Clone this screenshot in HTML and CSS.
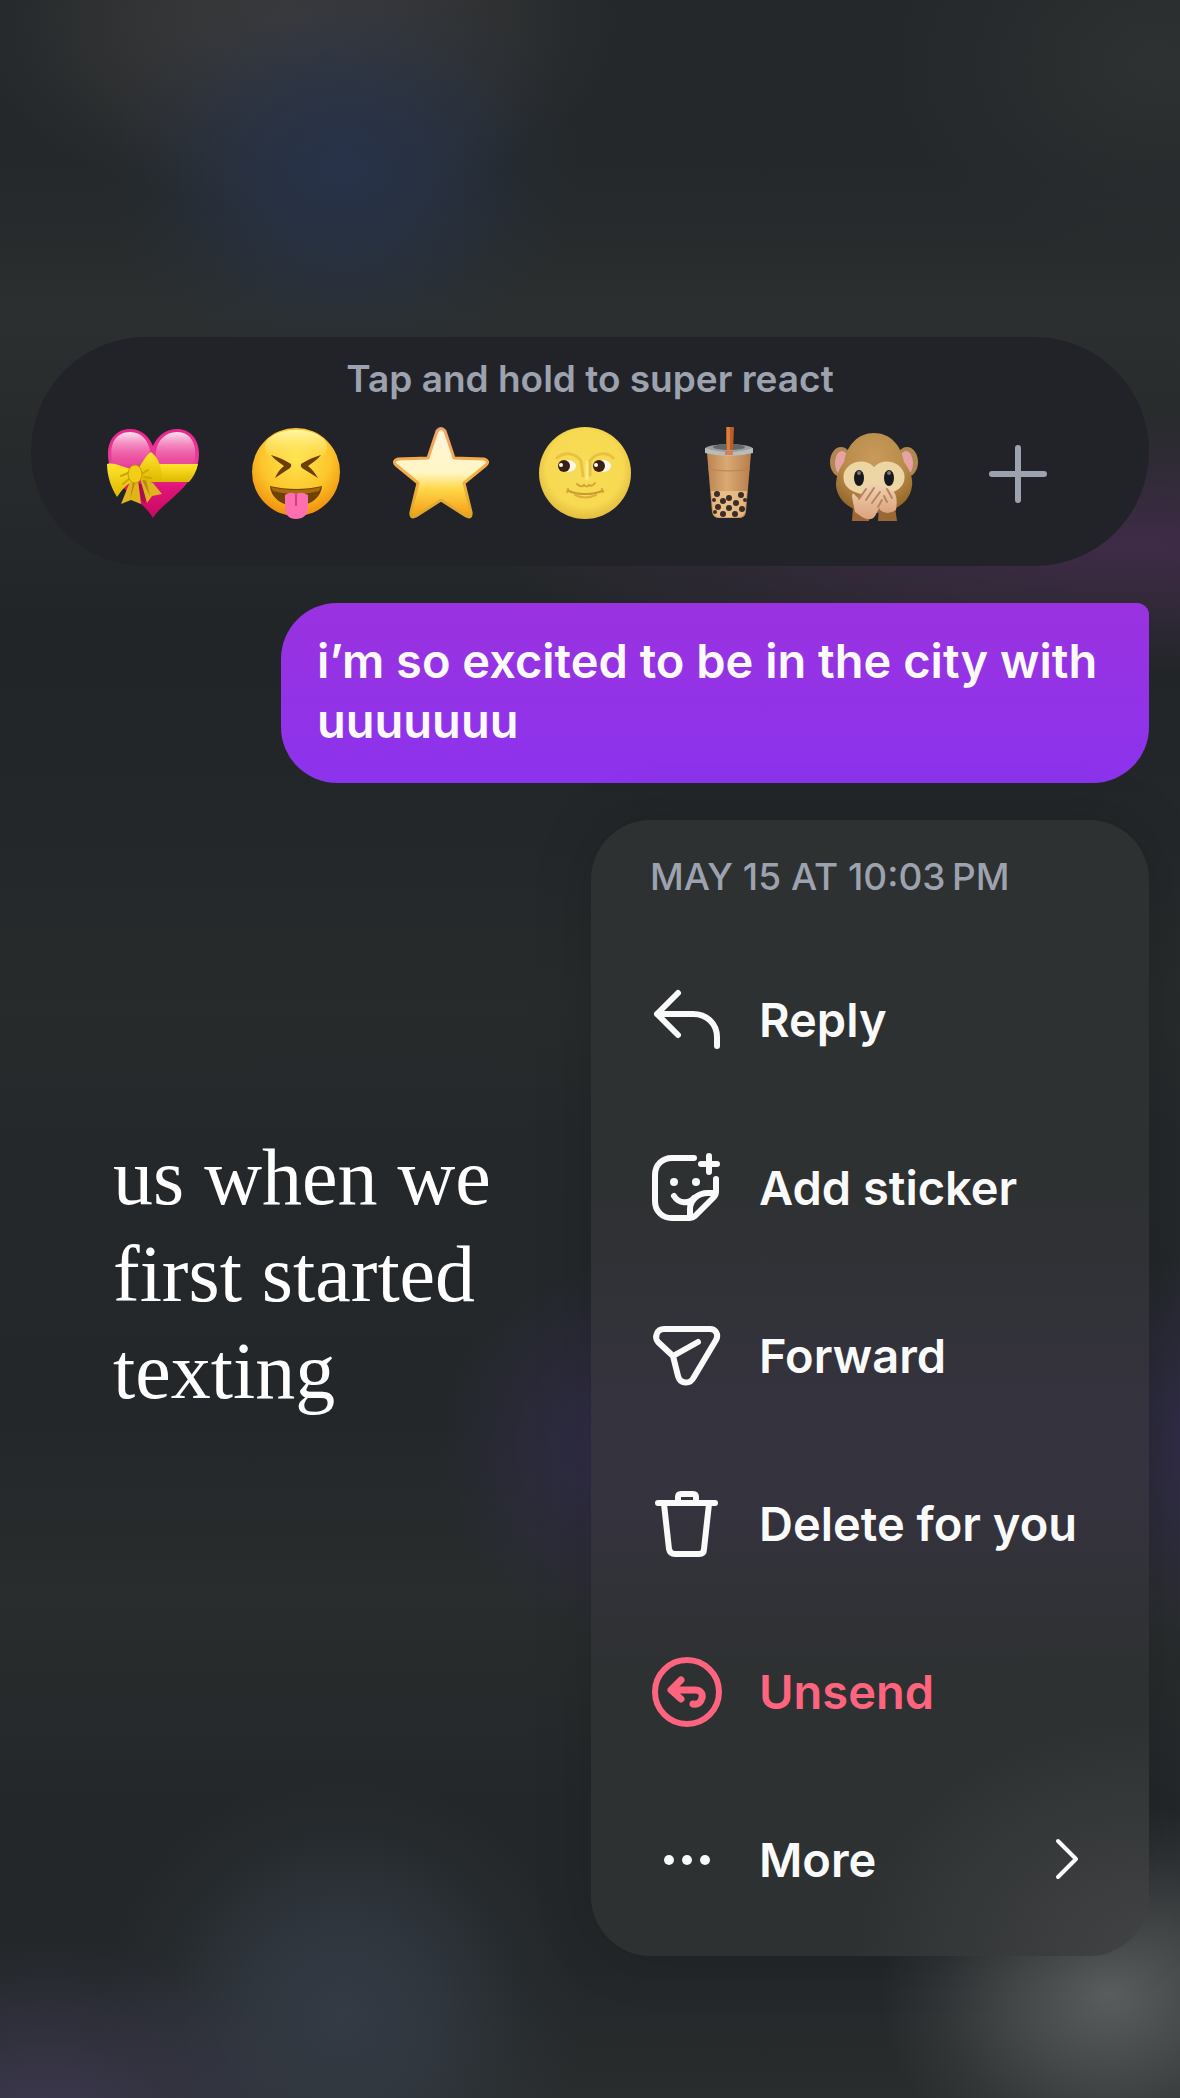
FILE: index.html
```html
<!DOCTYPE html>
<html lang="en">
  <head>
    <meta charset="UTF-8" />
    <meta name="viewport" content="width=device-width, initial-scale=1.0" />
    <title>Message actions</title>
    <link rel="stylesheet" href="styles.css">
  </head>
  <body>
    <main class="screen">
      <!-- Quick reactions -->
      <section class="reactions">
        <p class="reactions-hint">Tap and hold to super react</p>
        <div class="reactions-row">
          <button type="button" class="reaction" aria-label="Heart with ribbon">
            <svg viewBox="0 0 96 96">
              <defs>
                <linearGradient id="heartFill" x1="0" y1="0" x2="0" y2="1">
                  <stop offset="0" stop-color="#e9248c" />
                  <stop offset="0.4" stop-color="#e8429a" />
                  <stop offset="0.65" stop-color="#e0147a" />
                  <stop offset="1" stop-color="#c9095e" />
                </linearGradient>
                <linearGradient id="heartShine" x1="0" y1="0" x2="0" y2="1">
                  <stop offset="0" stop-color="#fde3f0" />
                  <stop offset="1" stop-color="#ee559f" stop-opacity="0.3" />
                </linearGradient>
                <linearGradient id="ribbonFill" x1="0" y1="0" x2="0" y2="1">
                  <stop offset="0" stop-color="#ffe52c" />
                  <stop offset="1" stop-color="#dfb800" />
                </linearGradient>
              </defs>
              <path fill="url(#heartFill)" d="M49 92C43 81 29 72 17 59C8 49 4 39 4 28C4 13 13 3 26 3C37 3 45 10 49 20C53 10 62 3 73 3C86 3 95 13 95 28C95 43 86 55 76 65C65 76 54 83 49 92Z" />
              <path fill="url(#heartShine)" d="M8 33C5 17 13 6 26 6C38 6 44 15 46 24C45 33 41 38 37 38H9ZM52 26C53 15 61 6 73 6C86 6 93 17 91 33L89 38H52Z" />
              <path fill="url(#ribbonFill)" d="M40 38H94Q92 48 85 56H40Z" />
              <path fill="#ab0b51" d="M34 57L43 60L41 78L37 74Z" />
              <path fill="#dfb41c" d="M27 53L17 78L27 74L37 78L34 54ZM36 52L43 77L48 70L58 68L49 57Z" />
              <path fill="#b7880c" d="M29 56L26 73L31 57ZM38 54L46 70L42 54Z" />
              <path fill="url(#ribbonFill)" d="M28 43C20 42 11 36 3 38C3 51 8 63 13 71C18 64 23 57 32 54Z" />
              <path fill="url(#ribbonFill)" d="M34 43C39 36 42 29 47 26C55 32 58 42 58 54C50 57 44 54 37 54Z" />
              <path fill="none" stroke="#d0a50a" stroke-width="2" stroke-linecap="round" d="M24 47L17 50M25 53L19 58M39 47L44 44M40 51L47 52" />
              <ellipse fill="#f4cd17" stroke="#c29b08" cx="31" cy="48" rx="7" ry="9" />
            </svg>
          </button>
          <button type="button" class="reaction" aria-label="Squinting face with tongue">
            <svg viewBox="0 0 96 96">
              <defs>
                <radialGradient id="faceFill" cx="0.5" cy="0.35" r="0.65">
                  <stop offset="0" stop-color="#ffe44e" />
                  <stop offset="0.6" stop-color="#fdc62c" />
                  <stop offset="1" stop-color="#ef8f0c" />
                </radialGradient>
                <linearGradient id="faceShine" x1="0" y1="0" x2="0" y2="1">
                  <stop offset="0" stop-color="#fff7a8" />
                  <stop offset="1" stop-color="#ffe44e" stop-opacity="0" />
                </linearGradient>
              </defs>
              <circle fill="url(#faceFill)" cx="48" cy="46" r="44" />
              <ellipse fill="url(#faceShine)" cx="48" cy="21" rx="31" ry="17" />
              <path fill="#6b3e04" d="M23 29C30 31 37 34 43 38Q44 40 42 42L27 52C29 47 32 43 36 40C32 37 27 34 23 29ZM73 29C66 31 59 34 53 38Q52 40 54 42L70 52C67 47 64 43 60 40C64 37 69 34 73 29Z" />
              <path fill="#6f4103" d="M22 60C38 64 58 64 74 60C73 72 62 80 48 80S23 72 22 60Z" />
              <path fill="#a56a0c" d="M23 61C38 65 58 65 73 61L71 65C57 69 39 69 25 65Z" />
              <path fill="#fd6fae" d="M37 69Q42 65 48 68Q54 65 60 69V81C60 89 55 93 48 93S37 89 37 81Z" />
              <path fill="none" stroke="#cf3d82" stroke-width="2" stroke-linecap="round" d="M48 69V79" />
            </svg>
          </button>
          <button type="button" class="reaction" aria-label="Star">
            <svg viewBox="0 0 96 96">
              <defs>
                <linearGradient id="starFill" x1="0" y1="0" x2="0" y2="1">
                  <stop offset="0" stop-color="#fff3dc" />
                  <stop offset="0.5" stop-color="#fff6c4" />
                  <stop offset="0.68" stop-color="#ffd84a" />
                  <stop offset="1" stop-color="#f79a12" />
                </linearGradient>
                <linearGradient id="starEdge" x1="0" y1="0" x2="0" y2="1">
                  <stop offset="0" stop-color="#f2a066" />
                  <stop offset="0.6" stop-color="#f4b040" />
                  <stop offset="1" stop-color="#d9a82a" />
                </linearGradient>
              </defs>
              <path fill="url(#starFill)" stroke="url(#starEdge)" stroke-width="3" stroke-linejoin="round" d="M44 5Q48 0 52 5L61 32L91 33Q97 35 93 39L71 57L78 86Q79 93 73 90L48 74L23 90Q17 93 18 86L25 57L3 39Q-1 35 5 33L35 32Z" />
            </svg>
          </button>
          <button type="button" class="reaction" aria-label="Full moon face">
            <svg viewBox="0 0 96 96">
              <defs>
                <radialGradient id="moonFill" cx="0.5" cy="0.45" r="0.55">
                  <stop offset="0" stop-color="#f8dc55" />
                  <stop offset="0.75" stop-color="#f7da52" />
                  <stop offset="1" stop-color="#e3bd40" />
                </radialGradient>
              </defs>
              <circle fill="url(#moonFill)" cx="48" cy="47" r="46" />
              <path fill="none" stroke="#e8c142" stroke-width="3" stroke-linecap="round" d="M20 32C27 25 39 27 44 35L46 50M76 32C70 25 58 27 53 35V49" />
              <ellipse fill="#fff8e8" cx="31" cy="40" rx="8" ry="6" />
              <ellipse fill="#fff8e8" cx="66" cy="40" rx="8" ry="6" />
              <circle fill="#3c1f14" cx="27" cy="40" r="6" />
              <circle fill="#3c1f14" cx="62" cy="40" r="6" />
              <circle fill="#fff" cx="24" cy="39" r="2" />
              <circle fill="#fff" cx="59" cy="39" r="2" />
              <path fill="none" stroke="#d3a436" stroke-width="2" stroke-linecap="round" d="M40 58Q44 62 47 59Q50 62 52 59Q55 61 58 57M30 66Q31 65 31 63M66 66Q66 65 65 63" />
              <path fill="none" stroke="#cb9a35" stroke-width="2" stroke-linecap="round" d="M32 65C40 69 56 69 65 65" />
              <path fill="none" stroke="#dcae3d" stroke-width="2" stroke-linecap="round" d="M38 69Q48 74 59 69" />
              <path fill="none" stroke="#fdea82" stroke-width="3" stroke-linecap="round" d="M50 36V53" />
            </svg>
          </button>
          <button type="button" class="reaction" aria-label="Bubble tea">
            <svg viewBox="0 0 96 96">
              <defs>
                <linearGradient id="teaFill" x1="0" y1="0" x2="1" y2="0">
                  <stop offset="0" stop-color="#bc8351" />
                  <stop offset="0.45" stop-color="#daaa73" />
                  <stop offset="1" stop-color="#b77d4b" />
                </linearGradient>
              </defs>
              <path fill="url(#teaFill)" d="M26 27H70L65 86Q64 92 58 92H38Q32 92 31 86Z" />
              <path fill="#f0c891" opacity="0.7" d="M30 65H66L64 86Q63 91 57 91H38Q33 91 32 85Z" />
              <path fill="none" stroke="#bb8251" stroke-width="1" d="M27 43Q48 47 69 43" />
              <ellipse fill="#9b9d9e" cx="48" cy="23" rx="24" ry="5" />
              <path fill="#babbbb" d="M24 22Q48 30 72 22V27Q48 33 24 27Z" />
              <ellipse fill="#5f6769" cx="48" cy="21" rx="16" ry="3" />
              <path fill="#b95e26" d="M45 1H53L52 24H45Z" />
              <path fill="#d67f3e" d="M46 1H49V24H46Z" />
              <path fill="#df7951" d="M44 25H52V29H44Z" />
              <g fill="#3c2d27">
                <circle cx="36" cy="68" r="3" /><circle cx="60" cy="69" r="3" />
                <circle cx="48" cy="72" r="3" /><circle cx="42" cy="75" r="3" />
                <circle cx="33" cy="74" r="2" /><circle cx="55" cy="77" r="3" />
                <circle cx="64" cy="74" r="2" /><circle cx="37" cy="81" r="3" />
                <circle cx="48" cy="82" r="3" /><circle cx="61" cy="83" r="3" />
                <circle cx="42" cy="88" r="3" /><circle cx="54" cy="88" r="3" />
                <circle cx="34" cy="86" r="2" />
              </g>
            </svg>
          </button>
          <button type="button" class="reaction" aria-label="Speak-no-evil monkey">
            <svg viewBox="0 0 96 96">
              <defs>
                <radialGradient id="furFill" cx="0.5" cy="0.3" r="0.7">
                  <stop offset="0" stop-color="#c99b5a" />
                  <stop offset="0.6" stop-color="#b98b4a" />
                  <stop offset="1" stop-color="#946629" />
                </radialGradient>
                <linearGradient id="handFill" x1="0" y1="0" x2="0" y2="1">
                  <stop offset="0" stop-color="#f0d3b2" />
                  <stop offset="1" stop-color="#dba37d" />
                </linearGradient>
              </defs>
              <ellipse fill="#b18751" cx="15" cy="36" rx="11" ry="15" />
              <ellipse fill="#b18751" cx="81" cy="36" rx="11" ry="15" />
              <ellipse fill="#e7a3a4" cx="16" cy="37" rx="7" ry="12" />
              <ellipse fill="#e7a3a4" cx="80" cy="37" rx="7" ry="12" />
              <path fill="url(#furFill)" d="M48 7C64 7 75 19 78 36C85 45 87 54 86 60C84 77 68 87 48 87S12 77 10 60C10 50 13 43 18 36C21 19 32 7 48 7Z" />
              <path fill="#ecd6a6" d="M48 41C38 31 22 36 18 47C15 60 25 69 48 69S81 60 78 47C74 36 58 31 48 41Z" />
              <ellipse fill="#18191c" cx="33" cy="52" rx="5" ry="8" />
              <ellipse fill="#18191c" cx="63" cy="52" rx="5" ry="8" />
              <circle fill="#777" cx="33" cy="47" r="2" />
              <circle fill="#777" cx="63" cy="47" r="2" />
              <path fill="#9b6835" d="M27 81H44L43 95H26ZM53 81H69L71 95H52Z" />
              <path fill="url(#handFill)" d="M52 59Q55 55 59 60L68 66Q72 71 70 84Q61 90 54 84L47 66Z" />
              <path fill="url(#handFill)" d="M26 71Q26 65 29 69L33 73L42 58Q46 55 47 59L52 58Q55 60 52 64Q58 64 56 69Q59 71 56 77L49 90Q45 96 36 91L29 86Z" />
              <path fill="none" stroke="#b98560" stroke-width="2" stroke-linecap="round" d="M33 73L40 63M40 74L48 62M46 77L54 66M52 81L56 74M61 63L66 72M58 70L61 76" />
            </svg>
          </button>
          <button type="button" class="reaction" aria-label="More reactions">
            <svg viewBox="0 0 96 96">
              <path class="plus" d="M22 48H74M48 22V74" />
            </svg>
          </button>
        </div>
      </section>

      <!-- Selected message -->
      <p class="bubble">i’m so excited to be in the city with uuuuuuu</p>

      <div class="lower">
        <p class="caption">us when we<br />first started<br />texting</p>

        <!-- Message menu -->
        <nav class="menu">
          <p class="menu-time">MAY 15 AT 10:03&#8201;PM</p>
          <button type="button" class="menu-item">
            <svg class="icon" viewBox="0 0 72 72">
              <path d="M28 10L7 31L28 52M7 31H43C57 31 67 41 67 54V63" />
            </svg>
            <span>Reply</span>
          </button>
          <button type="button" class="menu-item">
            <svg class="icon" viewBox="0 0 72 72">
              <path d="M44 7H22C12 7 5 14 5 24V50C5 60 12 67 22 67H40Q43 67 45 65L63 47Q66 44 66 41V28" />
              <path d="M64 42H58C47 42 40 50 40 58V65M24 45C29 53 39 53 44 47" />
              <path d="M51 13H67M59 5V21" />
              <circle class="dot" cx="24" cy="31" r="4" />
              <circle class="dot" cx="46" cy="31" r="4" />
            </svg>
            <span>Add sticker</span>
          </button>
          <button type="button" class="menu-item">
            <svg class="icon" viewBox="0 0 72 72">
              <path d="M14 10H60C66 10 69 16 66 21L44 58C40 66 30 65 28 57L23 37L8 23C4 18 7 10 14 10ZM23 37L48 23" />
            </svg>
            <span>Forward</span>
          </button>
          <button type="button" class="menu-item">
            <svg class="icon" viewBox="0 0 72 72">
              <path d="M8 16H65M28 15V10Q28 7 31 7H43Q46 7 46 10V15M14 17L19 62Q20 67 25 67H49Q54 67 54 62L59 17" />
            </svg>
            <span>Delete for you</span>
          </button>
          <button type="button" class="menu-item danger">
            <svg class="icon" viewBox="0 0 72 72">
              <circle cx="37" cy="37" r="32" />
              <path class="thick" d="M31 25L21 35L31 44M22 35H45C51 35 53 39 52 43C51 47 48 50 43 49" />
            </svg>
            <span>Unsend</span>
          </button>
          <button type="button" class="menu-item">
            <svg class="icon" viewBox="0 0 72 72">
              <circle class="dot" cx="19" cy="37" r="5" />
              <circle class="dot" cx="37" cy="37" r="5" />
              <circle class="dot" cx="55" cy="37" r="5" />
            </svg>
            <span>More</span>
            <svg class="chevron" viewBox="0 0 24 44">
              <path d="M3 4L21 22L3 40" />
            </svg>
          </button>
        </nav>
      </div>
    </main>
  </body>
</html>
```
FILE: styles.css
```css
* {
  box-sizing: border-box;
}
body {
  margin: 0;
  min-height: 100vh;
  color: #fafafa;
  font-family: Inter, "Liberation Sans", sans-serif;
  /* blurred chat behind the overlay */
  background:
    radial-gradient(ellipse 230px 190px at 94% 95%, #5a5e5f, #5a5e5f99 40%, #5a5e5f33 75%, #5a5e5f00),
    radial-gradient(ellipse 260px 180px at 4% 101%, #3c3850, #3c385080 45%, #3c385000),
    radial-gradient(ellipse 240px 240px at 29% 96%, #343b45, #343b45b3 40%, #343b4533 75%, #343b4500),
    radial-gradient(ellipse 200px 190px at 54% 69%, #332d4c, #332d4c80 50%, #332d4c00),
    radial-gradient(ellipse 120px 200px at 102% 69%, #332d4c, #332d4c80 50%, #332d4c00),
    radial-gradient(ellipse 660px 130px at 96% 26%, #3f2b47, #3f2b4780 50%, #3f2b4700),
    radial-gradient(ellipse 240px 200px at 29% 8%, #28334a, #28334aaa 40%, #28334a33 75%, #28334a00),
    radial-gradient(ellipse 320px 190px at 25% 1%, #3b3b3c, #3b3b3c99 50%, #3b3b3c00),
    radial-gradient(ellipse 260px 200px at 98% 3%, #2d3132, #2d313200),
    linear-gradient(#24282a 0%, #24282a 8%, #2b2f30 15%, #212527 30%, #232729 40%, #272b2c 48%, #24282a 54%, #232729 68%, #292d2e 76%, #232729 86%, #232729 94%, #292d2e 100%);
}
p {
  margin: 0;
}
button {
  border: none;
  background: none;
  color: inherit;
  font: inherit;
  cursor: pointer;
}
.screen {
  display: flex;
  flex-direction: column;
  gap: 37px;
  padding: 337px 31px 0;
}

/* Quick reactions */
.reactions {
  display: flex;
  flex-direction: column;
  gap: 26px;
  padding: 21px 59px 44px 49px;
  border-radius: 115px;
  background: #222328;
}
.reactions-hint {
  padding-left: 10px;
  text-align: center;
  color: #9ca3af;
  font-size: 37px;
  font-weight: 600;
  line-height: 42px;
}
.reactions-row {
  display: grid;
  grid-template-columns: repeat(7, 1fr);
}
.reaction {
  display: flex;
  justify-content: center;
  padding: 0;
}
.reaction svg {
  width: 96px;
  height: 96px;
}
.plus {
  fill: none;
  stroke: #9ca3af;
  stroke-width: 6px;
  stroke-linecap: round;
}

/* Selected message */
.bubble {
  align-self: flex-end;
  max-width: 868px;
  padding: 28px 36px 32px;
  border-radius: 56px 12px 56px 56px;
  background: linear-gradient(#9a32df, #8c33ed);
  font-size: 47px;
  font-weight: 600;
  line-height: 60px;
}

/* Caption and menu */
.lower {
  display: flex;
  justify-content: space-between;
  align-items: flex-start;
}
.caption {
  padding: 309px 0 0 82px;
  color: #fff;
  font-family: "Liberation Serif", serif;
  font-size: 80px;
  line-height: 97px;
}
.menu {
  width: 558px;
  padding-bottom: 13px;
  border-radius: 60px;
  background:
    radial-gradient(ellipse 300px 240px at 100% 100%, #414344, #41434400),
    linear-gradient(#2e3132 0%, #2e3132 32%, #35333e 52%, #35333e 60%, #2e3132 75%, #2e3132 100%);
  box-shadow: 0 0 60px rgba(0, 0, 0, 0.15);
}
.menu-time {
  padding: 36px 59px 37px;
  color: #9ca3af;
  font-size: 37px;
  font-weight: 500;
  line-height: 42px;
}
.menu-item {
  display: flex;
  align-items: center;
  gap: 37px;
  width: 100%;
  height: 168px;
  padding: 0 70px 0 59px;
  font-size: 47px;
  font-weight: 600;
  text-align: left;
  white-space: nowrap;
}
.menu-item.danger {
  color: #ff647f;
}
.icon {
  flex: none;
  width: 72px;
  height: 72px;
  fill: none;
  stroke: currentColor;
  stroke-width: 6px;
  stroke-linecap: round;
  stroke-linejoin: round;
}
.icon .dot {
  fill: currentColor;
  stroke: none;
}
.icon .thick {
  stroke-width: 7px;
}
.chevron {
  width: 24px;
  height: 44px;
  margin-left: auto;
  fill: none;
  stroke: currentColor;
  stroke-width: 4px;
  stroke-linecap: round;
  stroke-linejoin: round;
}
```
